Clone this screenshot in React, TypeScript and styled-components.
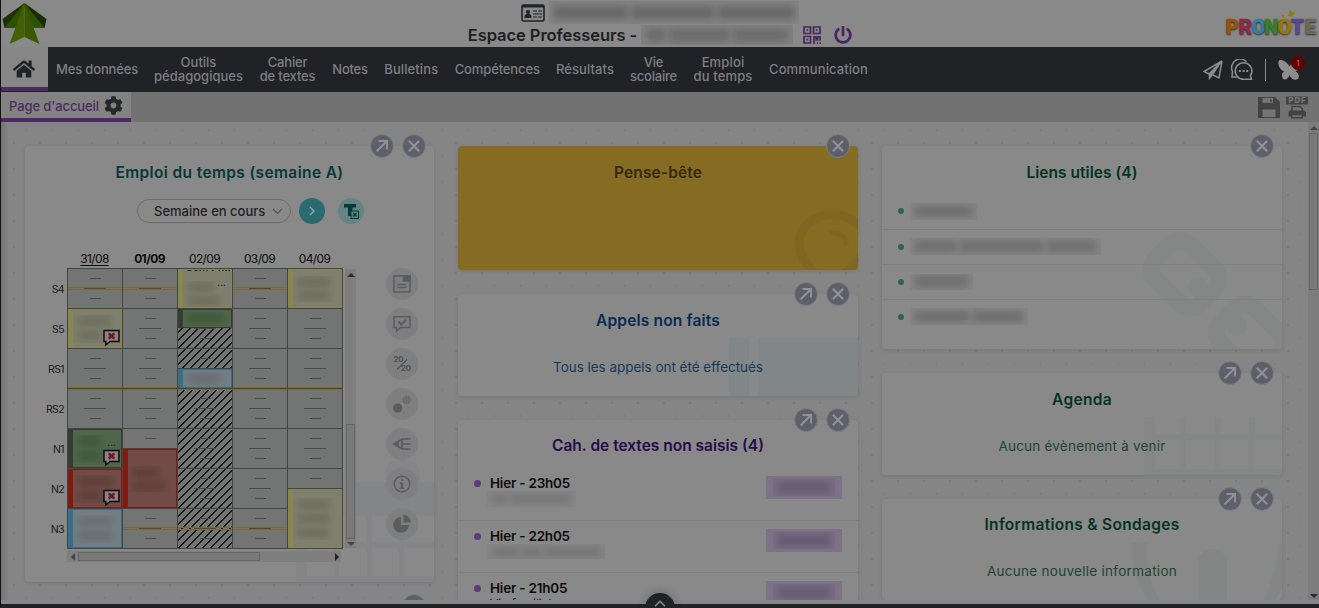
import React from 'react';
import styled, { createGlobalStyle, css } from 'styled-components';
import { FaHome, FaCog, FaPowerOff } from 'react-icons/fa';

const Global = createGlobalStyle`
  * { box-sizing: border-box; }
  body { margin: 0; font-family: Inter, "Liberation Sans", sans-serif; background: #868686; color: #0c0c0c; }
`;

const Screen = styled.div`
  width: 1319px;
  height: 608px;
  display: flex;
  flex-direction: column;
  overflow: hidden;
  background: #868686;
  border-left: 1px solid #111;
  border-bottom: 4px solid #212226;
`;

/* ---------- redacted text ---------- */
const BlurBox = styled.span<{ $w: number; $h: number; $bg?: string }>`
  display: inline-flex;
  flex: none;
  align-items: center;
  gap: 4px;
  width: ${p => p.$w}px;
  height: ${p => p.$h}px;
  padding: 0 5px;
  overflow: hidden;
  background: ${p => p.$bg ?? '#858585'};
`;
const BlurWord = styled.i<{ $grow: number; $tone: string; $t: number }>`
  flex: ${p => p.$grow} 1 0;
  height: ${p => p.$t}px;
  background: ${p => p.$tone};
  filter: blur(3.5px);
`;
interface RedactedProps { w: number; h: number; words: number[]; bg?: string; tone?: string; thick?: number }
const Redacted = ({ w, h, words, bg, tone = '#6e6e6e', thick = 11 }: RedactedProps) => (
  <BlurBox $w={w} $h={h} $bg={bg}>
    {words.map((g, i) => <BlurWord key={i} $grow={g} $tone={tone} $t={thick} />)}
  </BlurBox>
);

/* ---------- header ---------- */
const Header = styled.header`
  flex: none;
  height: 47px;
  display: grid;
  grid-template-columns: 130px 1fr 130px;
  background: #898989;
`;
const Leaf = styled.svg`
  display: block;
  margin: 2px 0 0 0;
`;
const Identity = styled.div`
  display: flex;
  flex-direction: column;
  align-items: center;
`;
const NameLine = styled.div`
  display: flex;
  align-items: center;
  height: 23px;
  gap: 4px;
  margin: 1px 0 0 0;
`;
const SpaceLine = styled.div`
  display: flex;
  align-items: center;
  height: 22px;
  font-size: 16.5px;
  font-weight: 600;
  letter-spacing: -0.06px;
  color: #1d1e22;
  white-space: nowrap;
`;
const QrIcon = styled.svg`margin: 0 13px 0 10px;`;
const Power = styled(FaPowerOff)`
  font-size: 18px;
  color: #4b2661;
`;
const Brand = styled.div`
  position: relative;
  display: flex;
  justify-content: flex-end;
  padding: 15px 2px 0 0;
`;
const Letter = styled.span<{ $c: string }>`
  width: 13px;
  display: flex;
  justify-content: center;
  font: 900 20.5px/24px Roboto, sans-serif;
  color: ${p => p.$c};
  -webkit-text-stroke: 0.4px ${p => p.$c};
  text-shadow: 0 1px 2px rgba(0, 0, 0, 0.75);
`;
const Crown = styled.svg`
  position: absolute;
  right: 23px;
  top: 9px;
`;

/* ---------- main navigation ---------- */
const Nav = styled.nav`
  flex: none;
  height: 45px;
  display: flex;
  background: #212226;
  color: #7e7f82;
`;
const HomeTab = styled.div`
  width: 47px;
  height: 44px;
  display: flex;
  align-items: center;
  justify-content: center;
  padding: 4px 2px 0 0;
  background: #868686;
  border-bottom: 4px solid #4e2a63;
  color: #212226;
  font-size: 22px;
`;
const NavItem = styled.div<{ $w: number; $ls: number }>`
  width: ${p => p.$w}px;
  display: flex;
  align-items: center;
  justify-content: center;
  padding-bottom: 2px;
  text-align: center;
  white-space: pre;
  font-size: 13px;
  font-weight: 500;
  line-height: 14px;
  letter-spacing: ${p => p.$ls}px;
`;
const NavTools = styled.div`
  margin-left: auto;
  display: flex;
  align-items: center;
  padding: 0 13px 0 0;
`;
const Divider = styled.span`
  width: 1px;
  height: 22px;
  margin: 0 12px 0 11px;
  background: #8a8a8a;
`;
const Alerts = styled.span`
  position: relative;
  display: flex;
  width: 28px;
`;
const Count = styled.b`
  position: absolute;
  right: 1px;
  top: -3px;
  width: 14px;
  height: 14px;
  border-radius: 50%;
  background: #640000;
  color: #86706f;
  font-size: 8px;
  font-weight: 500;
  line-height: 14px;
  text-align: center;
`;

/* ---------- page tabs ---------- */
const SubBar = styled.div`
  flex: none;
  height: 30px;
  display: flex;
  justify-content: space-between;
  background: #727272;
`;
const PageTab = styled.div`
  width: 130px;
  display: flex;
  align-items: center;
  gap: 5px;
  padding: 1px 0 0 8px;
  background: #828282;
  border-bottom: 4px solid #4e2a63;
  color: #4e2a63;
  font-size: 13px;
  font-weight: 500;
  letter-spacing: -0.1px;
  white-space: nowrap;
`;
const Gear = styled(FaCog)`
  flex: none;
  color: #26272a;
  font-size: 19px;
`;
const PageTools = styled.div`
  display: flex;
  gap: 5px;
  padding: 4px 11px 0 0;
`;

/* ---------- board ---------- */
const Board = styled.main`
  flex: none;
  height: 478px;
  display: flex;
  justify-content: space-between;
  overflow: hidden;
  background:
    linear-gradient(90deg, rgba(0, 0, 0, 0.14), rgba(0, 0, 0, 0) 8px),
    radial-gradient(circle at 13px 21px, #7b7b7b 1px, transparent 1.6px) 0 0 / 26px 26px,
    radial-gradient(circle at 26px 8px, #7b7b7b 1px, transparent 1.6px) 0 0 / 26px 26px,
    #858585;
`;
const Columns = styled.div`
  display: grid;
  grid-template-columns: 409px 400px 400px;
  gap: 24px;
  align-items: start;
  padding: 24px 0 0 24px;
`;
const Column = styled.div`
  display: flex;
  flex-direction: column;
  gap: 24px;
`;
type Tone = 'teal' | 'blue' | 'violet' | 'green' | 'gold';
const tones: Record<Tone, { title: string; text: string }> = {
  teal: { title: '#083838', text: '#083838' },
  blue: { title: '#062c50', text: '#163b5a' },
  violet: { title: '#270a4c', text: '#270a4c' },
  green: { title: '#053420', text: '#1b4636' },
  gold: { title: '#35290c', text: '#35290c' },
};
const CardBox = styled.section<{ $h: number; $tone: Tone; $pad: number }>`
  position: relative;
  height: ${p => p.$h}px;
  padding-top: ${p => p.$pad}px;
  border-radius: 4px;
  background: ${p => (p.$tone === 'gold' ? '#866b23' : '#898989')};
  box-shadow: 0 1px 4px rgba(0, 0, 0, 0.12);
`;
const Title = styled.h2<{ $tone: Tone; $ls: number }>`
  position: relative;
  margin: 0;
  text-align: center;
  font-size: 15.5px;
  font-weight: 600;
  line-height: 21px;
  letter-spacing: ${p => p.$ls}px;
  color: ${p => tones[p.$tone].title};
`;
const Message = styled.p<{ $tone: Tone; $ls: number }>`
  position: relative;
  margin: 26px 0 0;
  text-align: center;
  font-size: 13.5px;
  line-height: 20px;
  letter-spacing: ${p => p.$ls}px;
  color: ${p => tones[p.$tone].text};
`;
const CardActions = styled.div`
  position: absolute;
  right: 8px;
  top: -12px;
  display: flex;
  gap: 8px;
`;
const ActionDot = styled.span`
  width: 24px;
  height: 24px;
  display: flex;
  align-items: center;
  justify-content: center;
  border-radius: 50%;
  border: 1px solid #7f8086;
  background: #5d5f6a;
`;
const Watermark = styled.svg`
  position: absolute;
  right: 0;
  bottom: 0;
  border-bottom-right-radius: 4px;
`;
const OpenGlyph = () => (
  <ActionDot>
    <svg width="14" height="14" viewBox="0 0 14 14" fill="none" stroke="#929296" strokeWidth="1.9">
      <path d="M1.5 12.5L12 2M3.5 2H12v8.5" />
    </svg>
  </ActionDot>
);
const CloseGlyph = () => (
  <ActionDot>
    <svg width="14" height="14" viewBox="0 0 14 14" fill="none" stroke="#929296" strokeWidth="2">
      <path d="M1.8 1.8l10.4 10.4M12.2 1.8L1.8 12.2" />
    </svg>
  </ActionDot>
);
interface CardProps {
  h: number; tone: Tone; title: string; ls: number; open?: boolean; pad?: number;
  art?: React.ReactNode; children?: React.ReactNode;
}
const Card = ({ h, tone, title, ls, open, pad = 15.5, art, children }: CardProps) => (
  <CardBox $h={h} $tone={tone} $pad={pad}>
    {art}
    <Title $tone={tone} $ls={ls}>{title}</Title>
    {children}
    <CardActions>{open && <OpenGlyph />}<CloseGlyph /></CardActions>
  </CardBox>
);

/* ---------- timetable ---------- */
const WeekBar = styled.div`
  position: relative;
  display: flex;
  align-items: center;
  height: 26px;
  margin-top: 15.5px;
  padding-left: 112px;
`;
const Select = styled.div`
  width: 154px;
  height: 24px;
  display: flex;
  align-items: center;
  justify-content: space-between;
  padding: 0 7px 0 16px;
  border: 1px solid #6e6e6e;
  border-radius: 12px;
  font-size: 13px;
  font-weight: 500;
  color: #222;
  white-space: nowrap;
`;
const RoundButton = styled.span<{ $bg: string; $ml: number }>`
  width: 26px;
  height: 26px;
  margin-left: ${p => p.$ml}px;
  display: flex;
  align-items: center;
  justify-content: center;
  border-radius: 50%;
  background: ${p => p.$bg};
`;
const Days = styled.div`
  display: grid;
  grid-template-columns: repeat(5, 55px);
  height: 18px;
  margin: 26px 0 0 42px;
`;
const Day = styled.span<{ $kind?: 'past' | 'today' }>`
  font-size: 12px;
  line-height: 17px;
  letter-spacing: -0.62px;
  text-align: center;
  ${p => p.$kind === 'today' && css`font-weight: 700;`}
  ${p => p.$kind === 'past' && css`text-decoration: underline; text-underline-offset: 2px;`}
`;
const TableRow = styled.div`
  position: relative;
  display: flex;
  align-items: flex-start;
`;
const Hours = styled.div`
  width: 42px;
  display: grid;
  grid-auto-rows: 40px;
  padding-top: 1px;
`;
const Hour = styled.span`
  padding-right: 3px;
  text-align: right;
  font-size: 10.5px;
  line-height: 42px;
  letter-spacing: -0.6px;
  color: #1a1a1a;
`;
const Schedule = styled.div`
  display: grid;
  grid-template-columns: repeat(5, 55px);
  grid-template-rows: repeat(14, 20px);
  border-left: 1px solid #444;
  border-top: 1px solid #444;
`;
const tick = 'linear-gradient(#4a4a4a, #4a4a4a) no-repeat';
const gold = 'linear-gradient(#7d6c26, #7d6c26) no-repeat';
const Slot = styled.div<{ $c: number; $r: number; $hatch: boolean; $mid: boolean; $end: boolean; $start: boolean }>`
  grid-column: ${p => p.$c};
  grid-row: ${p => p.$r} / span 2;
  border-right: 1px solid #444;
  border-bottom: 1px solid #444;
  background:
    ${p => p.$mid && `${gold} 0 18px / 100% 1px, ${gold} 0 20px / 100% 1px,`}
    ${p => p.$end && `${gold} 0 38px / 100% 1px,`}
    ${p => p.$start && `${gold} 0 0 / 100% 1px,`}
    ${tick} 22px 9px / 11px 1px,
    ${tick} 16px 19px / 22px 1px,
    ${tick} 22px 29px / 11px 1px,
    ${p => p.$hatch && 'repeating-linear-gradient(135deg, transparent 0 4.9px, #111 4.9px 5.657px),'}
    #727574;
`;
type Hue = 'yellow' | 'green' | 'red' | 'blue';
const hues: Record<Hue, { edge: string; fill: string; ink: string }> = {
  yellow: { edge: '#89864e', fill: '#7f7f70', ink: '#6f6f60' },
  green: { edge: '#363c33', fill: '#4f664a', ink: '#40583c' },
  red: { edge: '#821a10', fill: '#714b46', ink: '#603f3b' },
  blue: { edge: '#356f89', fill: '#747d83', ink: '#686f74' },
};
const Lesson = styled.div<{ $c: number; $r: number; $n: number; $hue: Hue }>`
  position: relative;
  grid-column: ${p => p.$c};
  grid-row: ${p => p.$r} / span ${p => p.$n};
  display: flex;
  flex-direction: column;
  align-items: flex-start;
  justify-content: center;
  overflow: hidden;
  margin: 0 1px 1px 0;
  border: 1px solid ${p => hues[p.$hue].edge};
  border-left-width: 5px;
  background: ${p => hues[p.$hue].fill};
`;
const LessonFrame = styled.div<{ $c: number; $r: number; $n: number }>`
  grid-column: ${p => p.$c};
  grid-row: ${p => p.$r} / span ${p => p.$n};
  margin-top: -1px;
  border-top: 1px solid #444;
`;
const CutLabel = styled.span`
  height: 11px;
  margin: -8px 0 auto 2px;
  font-size: 10.5px;
  font-weight: 500;
  line-height: 12px;
  white-space: nowrap;
`;
const Ellipsis = styled.span`
  position: absolute;
  right: 5px;
  top: 6px;
  font-size: 10px;
  line-height: 12px;
`;
const Flag = styled.svg`
  position: absolute;
  right: 1px;
  bottom: 1px;
`;
const MissingFlag = () => (
  <Flag width="17" height="17" viewBox="0 0 17 17">
    <path d="M1 1.500h15v11H7L2.800 16v-3.500H1z" fill="#8a8285" stroke="#080808" strokeWidth="1.4" />
    <path d="M5.700 4.300l5.600 5.400M11.300 4.300L5.700 9.700" stroke="#6f1424" strokeWidth="2.500" />
  </Flag>
);
const VScroll = styled.div`
  width: 11px;
  height: 279px;
  margin: 1px 0 0 2px;
  display: grid;
  grid-template-rows: 155px 115px 9px;
  justify-items: center;
  background: #7e7e7e;
`;
const HScroll = styled.div`
  position: relative;
  width: 274px;
  height: 11px;
  margin: 2px 0 0 42px;
  display: grid;
  grid-template-columns: 11px 182px 1fr;
  align-items: center;
  background: #7e7e7e;
`;
const Thumb = styled.span`
  width: 100%;
  height: 100%;
  border: 1px solid #666;
  background: #797979;
`;
const HThumb = styled(Thumb)`height: 9px;`;
const VThumb = styled(Thumb)`width: 9px;`;
const Arrow = styled.i<{ $dir: 'up' | 'down' | 'left' | 'right' }>`
  width: 0;
  height: 0;
  border: 4px solid transparent;
  ${p => p.$dir === 'up' && css`border-top: 0; border-bottom-color: #2b2b2b; margin-top: 4px;`}
  ${p => p.$dir === 'down' && css`border-bottom: 0; border-top-color: #444; margin-top: 3px;`}
  ${p => p.$dir === 'left' && css`border-left: 0; border-right-color: #444; margin-left: 4px;`}
  ${p => p.$dir === 'right' && css`border-right: 0; border-left-color: #222; margin-right: 2px; justify-self: end;`}
`;
const Shortcuts = styled.div`
  display: flex;
  flex-direction: column;
  gap: 8px;
  margin-left: 30px;
`;
const Shortcut = styled.span`
  width: 32px;
  height: 32px;
  display: flex;
  align-items: center;
  justify-content: center;
  border-radius: 50%;
  background: #7f7f7f;
`;
const GradeText = styled.span`
  display: grid;
  width: 17px;
  font-size: 8px;
  font-weight: 800;
  line-height: 9px;
  letter-spacing: -0.5px;
  background: linear-gradient(135deg, transparent 46%, #55565b 46% 54%, transparent 54%) center / 10px 13px no-repeat;
  color: #55565b;
  span + span { text-align: right; }
`;

const hatchedColumn = 3;
const golden = (c: number, row: number) =>
  (row === 0 && (c <= 2 || c === 4)) || (row === 6 && c >= 2 && c <= 4);
const hourNames = ['S4', 'S5', 'RS1', 'RS2', 'N1', 'N2', 'N3'];

interface LessonData { c: number; r: number; n: number; hue: Hue; lines: number[]; h: number; missing?: boolean; dots?: boolean; cut?: string }
const lessons: LessonData[] = [
  { c: 3, r: 1, n: 2, hue: 'yellow', lines: [36, 42], h: 13, cut: 'Com Pr…', dots: true },
  { c: 5, r: 1, n: 2, hue: 'yellow', lines: [42, 42], h: 13 },
  { c: 1, r: 3, n: 2, hue: 'yellow', lines: [42, 34], h: 14, missing: true },
  { c: 3, r: 3, n: 1, hue: 'green', lines: [46], h: 14 },
  { c: 3, r: 6, n: 1, hue: 'blue', lines: [42], h: 14 },
  { c: 1, r: 9, n: 2, hue: 'green', lines: [32, 32], h: 14, missing: true, dots: true },
  { c: 1, r: 11, n: 2, hue: 'red', lines: [44, 34], h: 14, missing: true },
  { c: 2, r: 10, n: 3, hue: 'red', lines: [36, 42], h: 13 },
  { c: 1, r: 13, n: 2, hue: 'blue', lines: [44, 44], h: 14 },
  { c: 5, r: 12, n: 3, hue: 'yellow', lines: [42, 42, 40], h: 14 },
];

const Timetable = () => (
  <>
    <WeekBar>
      <Select>
        Semaine en cours
        <svg width="11" height="7" fill="none" stroke="#555" strokeWidth="1.2"><path d="M1 1l4.500 4.500L10 1" /></svg>
      </Select>
      <RoundButton $bg="#2a6a70" $ml={8}>
        <svg width="6" height="10" fill="none" stroke="#93a8aa" strokeWidth="1.400"><path d="M1 1l4 4-4 4" /></svg>
      </RoundButton>
      <RoundButton $bg="#638483" $ml={13}>
        <svg width="16" height="16" viewBox="0 0 16 16">
          <path d="M1 1h12v3.500H9.500V13H5V4.500H1z" fill="#053a3c" />
          <rect x="8" y="8" width="7.500" height="7.500" fill="#638483" stroke="#053a3c" />
          <path d="M10 10l3.500 3.500M13.500 10L10 13.500" stroke="#053a3c" strokeWidth="1.300" />
        </svg>
      </RoundButton>
    </WeekBar>
    <Days>
      <Day $kind="past">31/08</Day><Day $kind="today">01/09</Day><Day>02/09</Day><Day>03/09</Day><Day>04/09</Day>
    </Days>
    <TableRow>
      <Hours>{hourNames.map(h => <Hour key={h}>{h}</Hour>)}</Hours>
      <Schedule>
        {hourNames.flatMap((h, row) => [1, 2, 3, 4, 5].map(c => (
          <Slot key={h + c} $c={c} $r={row * 2 + 1} $hatch={c === hatchedColumn} $mid={golden(c, row)}
            $end={row === 2} $start={row === 3} />
        )))}
        {lessons.map((l, i) => (
          <React.Fragment key={i}>
            <LessonFrame $c={l.c} $r={l.r} $n={l.n} />
            <Lesson $c={l.c} $r={l.r} $n={l.n} $hue={l.hue}>
              {l.cut && <CutLabel>{l.cut}</CutLabel>}
              {l.lines.map((w, k) => (
                <Redacted key={k} w={w} h={l.h} words={[1]} bg="transparent" tone={hues[l.hue].ink} thick={11} />
              ))}
              {l.dots && <Ellipsis>...</Ellipsis>}
              {l.missing && <MissingFlag />}
            </Lesson>
          </React.Fragment>
        ))}
      </Schedule>
      <VScroll><Arrow $dir="up" /><VThumb /><Arrow $dir="down" /></VScroll>
      <Shortcuts>
        <Shortcut>
          <svg width="18" height="18" fill="none" stroke="#5b5c61" strokeWidth="1.500">
            <path d="M1 1h16v16H1zM4.500 9.500h9M4.500 12.500h9" /><path d="M10.500 1h6.500v5h-6.500z" fill="#5b5c61" />
          </svg>
        </Shortcut>
        <Shortcut>
          <svg width="18" height="18" fill="none" stroke="#5b5c61" strokeWidth="1.500">
            <path d="M1 1.800h16v10.700H7.500L3.500 16v-3.500H1z" /><path d="M5.500 6.500l3 3L13 4.700" strokeWidth="2.300" />
          </svg>
        </Shortcut>
        <Shortcut><GradeText><span>20</span><span>20</span></GradeText></Shortcut>
        <Shortcut>
          <svg width="18" height="18" fill="#5b5c61"><circle cx="4.700" cy="13" r="4.600" /><circle cx="13.700" cy="4.900" r="4.300" opacity=".3" /><path d="M10.200 2.500h1.200v5h-1.200zM12.500 0.800h1.200v8.300h-1.200zM14.800 0.800h1.200v8.300h-1.200zM17 3h.9v4H17z" opacity=".5" /></svg>
        </Shortcut>
        <Shortcut>
          <svg width="18" height="14" fill="none" stroke="#5b5c61" strokeWidth="1.700">
            <path d="M17.500 2H9L1.500 7 9 12h8.500M10 7h7.500M9 2v10" /><path d="M1 7l4-2.500v5z" fill="#5b5c61" />
          </svg>
        </Shortcut>
        <Shortcut>
          <svg width="18" height="18"><circle cx="9" cy="9" r="7.800" fill="none" stroke="#5b5c61" strokeWidth="1.500" /><path d="M8 4h2.300v2H8zM6.700 7.500h3.500v5h1v1.500H6.700v-1.500h1.100V9H6.700z" fill="#5b5c61" /></svg>
        </Shortcut>
        <Shortcut>
          <svg width="18" height="18" fill="#5b5c61"><path d="M8 2v8h8a7.900 7.900 0 1 1-8-8z" /><path d="M10.500 0A7.500 7.500 0 0 1 17.800 7.500h-7.300z" /></svg>
        </Shortcut>
      </Shortcuts>
    </TableRow>
    <HScroll><Arrow $dir="left" /><HThumb /><Arrow $dir="right" /></HScroll>
  </>
);

/* ---------- lists ---------- */
const Lessons = styled.div`
  position: relative;
  margin-top: 10.5px;
`;
const TodoRow = styled.div`
  display: grid;
  grid-template-columns: 7px 1fr 76px;
  column-gap: 9px;
  align-items: start;
  height: 52px;
  padding: 8px 16px 0;
  & + & { border-top: 1px solid #7f7f7f; padding-top: 8px; }
  &:first-child { height: 53px; padding-top: 9px; }
`;
const Dot = styled.i`
  width: 7px;
  height: 7px;
  margin-top: 4px;
  border-radius: 50%;
  background: #5b3d7e;
`;
const When = styled.div`
  margin-top: -0.5px;
  font-size: 13.5px;
  font-weight: 600;
  line-height: 16px;
  letter-spacing: -0.22px;
`;
const Sub = styled.div`
  display: flex;
  margin: 0 0 0 -3px;
`;
const SubText = styled.div`
  font-size: 12px;
  line-height: 15px;
`;
const Tag = styled.span`
  display: flex;
  align-items: center;
  justify-content: center;
  height: 23px;
  background: #7c7186;
`;
const Links = styled.div`
  position: relative;
  margin-top: 11px;
`;
const LinkRow = styled.div`
  display: flex;
  align-items: center;
  gap: 6px;
  height: 35px;
  padding-left: 16px;
  & + & { border-top: 1px solid #7e8080; }
`;
const GreenDot = styled.i`
  width: 6px;
  height: 6px;
  border-radius: 50%;
  background: #316549;
`;

/* ---------- edge controls ---------- */
const PageScroll = styled.div`
  width: 11px;
  display: grid;
  grid-template-rows: 11px 157px 1fr;
  justify-items: center;
  background: #7c7c7c;
  ${Arrow}:last-child { align-self: end; margin-bottom: 2px; border-top-color: #2b2b2b; }
  ${Arrow}:first-child { border-bottom-color: #444; }
`;
const Drawer = styled.div`
  position: absolute;
  left: 645px;
  top: 593px;
  width: 30px;
  height: 15px;
  display: flex;
  justify-content: center;
  padding-top: 7px;
  border-radius: 15px 15px 0 0;
  background: #212226;
  box-shadow: 0 -2px 8px rgba(0, 0, 0, 0.2);
`;

const brand: [string, string][] = [['P', '#9a5208'], ['R', '#8a2b48'], ['O', '#377c9c'], ['N', '#3d7c2c'], ['O', '#9a7508'], ['T', '#584993'], ['E', '#6b6858']];
const nav: [string, number, number][] = [
  ['Mes données', 98, -0.16], ['Outils\npédagogiques', 105, 0], ['Cahier\nde textes', 73, -0.18], ['Notes', 52, -0.25],
  ['Bulletins', 70.5, 0.1], ['Compétences', 101.5, -0.12], ['Résultats', 74, 0.07], ['Vie\nscolaire', 63, -0.2],
  ['Emploi\ndu temps', 76, 0.15], ['Communication', 115, 0.09],
];

export default function App() {
  return (
    <Screen>
      <Global />
      <Header>
        <Leaf width="47" height="43" viewBox="0 0 46 43">
          <path d="M23 1L1 17l2 9h18z" fill="#1d3202" /><path d="M23 1l22 16-2 9H25z" fill="#1a2b02" />
          <path d="M23 1L3 26h16zM23 1l20 25H27z" fill="#2b5303" />
          <path d="M23 1L8 42l15-7z" fill="#445f04" /><path d="M23 1l15 41-15-7z" fill="#3d5603" />
        </Leaf>
        <Identity>
          <NameLine>
            <svg width="24" height="18" viewBox="0 0 24 18">
              <rect x="1" y="1" width="22" height="16" rx="1.500" fill="none" stroke="#212226" strokeWidth="1.600" />
              <path d="M1 1h22v2.500H1z" fill="#212226" />
              <circle cx="7" cy="8" r="2.100" fill="#212226" />
              <path d="M3.500 14c0-4 1.500-4 3.500-4s3.500 0 3.500 4z" fill="#212226" />
              <path d="M12 7h4m1 0h4M12 10h9M12 13h4m1 0h4" stroke="#212226" strokeWidth="1.200" />
            </svg>
            <Redacted w={250} h={23} words={[75, 86, 78]} bg="#838383" tone="#676767" thick={13} />
          </NameLine>
          <SpaceLine>
            <span>Espace Professeurs -&nbsp;</span>
            <Redacted w={152} h={20} words={[20, 65, 60]} bg="#818181" tone="#6b6b6b" thick={12} />
            <QrIcon width="18" height="18" fill="none" stroke="#4b2661" strokeWidth="1.700">
              <path d="M1 1h6.500v6.500H1zM10.500 1H17v6.500h-6.500zM1 10.500h6.500V17H1z" />
              <path d="M3.400 4.200h1.700M12.900 4.200h1.700M3.400 13.700h1.700M11 18v-7.200h2.200v3h1.400v-3H17v4M13.800 17h1.400M16.400 17H18" />
            </QrIcon>
            <Power />
          </SpaceLine>
        </Identity>
        <Brand>
          {brand.map(([l, c], i) => <Letter key={i} $c={c}>{l}</Letter>)}
          <Crown width="15" height="9"><path d="M6 7l2-2 1-4 2 2 3 1-2 2-1 2-3-1z" fill="#8f7c10" /><circle cx="2" cy="7" r="1.500" fill="#8f7c10" /></Crown>
        </Brand>
      </Header>
      <Nav>
        <HomeTab><FaHome /></HomeTab>
        {nav.map(([t, w, ls]) => <NavItem key={t} $w={w} $ls={ls}>{t}</NavItem>)}
        <NavTools>
          <svg width="20" height="20" fill="none" stroke="#8d8d8d" strokeWidth="1.500">
            <path d="M19 1L1 11.500l5 2.500zM19 1l-3 17-6-3" /><path d="M19 1L6 14v5.500l3.500-4z" fill="#8d8d8d" strokeWidth=".6" />
          </svg>
          <svg width="31" height="22" viewBox="-8 0 31 22" fill="none" stroke="#8d8d8d" strokeWidth="1.500">
            <path d="M20.500 20.300h-7.700a8.300 8.300 0 1 1 6.600-3.600z" /><path d="M15.500 2.800A8.600 8.600 0 0 0 1.500 12.500L1 18h5" />
            <path d="M7.900 12h2M11.600 12h2M15.300 12h2" strokeWidth="2" />
          </svg>
          <Divider />
          <Alerts>
            <svg width="23" height="22" viewBox="0 0 23 22" fill="#8d8d8d">
              <path d="M11.500 7.500C9.500 3 4.500.5 2 1s-2 6 .5 9c1 1.200 2.500 2 3.800 2.200C4 13.500 3.500 16 4.500 19c2 3 5.500 1.500 7-3 1.500 4 5 6 8.500 4 2-2.500.5-6-2.500-8 4-1 5.500-4.500 4.500-8.500-2-3-7.500-1-10.500 4z" />
            </svg>
            <Count>1</Count>
          </Alerts>
        </NavTools>
      </Nav>
      <SubBar>
        <PageTab>Page d'accueil<Gear /></PageTab>
        <PageTools>
          <svg width="23" height="23">
            <path d="M0 1h17l5 5v16H0z" fill="#434343" /><path d="M4.500 2H15v5H4.500zM4.500 13.500h13V21h-13z" fill="#747474" /><path d="M12 3.500h1.800V6H12z" fill="#434343" />
          </svg>
          <svg width="22" height="23">
            <rect y="0.500" width="22" height="8" fill="#434343" />
            <text x="11" y="7.400" textAnchor="middle" fontFamily="Inter" fontSize="7.800" fontWeight="800" fill="#787878" textLength="17">PDF</text>
            <path d="M6 16v-5.500h8l2.500 2.500v3" fill="none" stroke="#434343" strokeWidth="1.500" />
            <path d="M2.500 16l1.500-1.500h14l2 1.500v4.500h-3V18H5v2.500H2.500z" fill="#434343" /><path d="M5.700 18.500h10.600v3.300H5.700z" fill="none" stroke="#434343" strokeWidth="1.400" />
          </svg>
        </PageTools>
      </SubBar>
      <Board>
        <Columns>
          <Column>
            <Card h={436} tone="teal" title="Emploi du temps (semaine A)" ls={0.37} open art={
              <Watermark width="138" height="122" viewBox="0 0 138 122">
                <path fill="#828687" d="M0 22h90V12q0-12 17-12t17 12v10h14v100H0z" />
                <path fill="#898989" d="M11 56h27v26H11zM43 56h27v26H43zM76 56h26v26H76zM107 56h31v26h-31zM11 88h27v28H11zM43 88h28v28H43zM76 88h27v28H76zM108 88h30v28h-30z" />
              </Watermark>}>
              <Timetable />
            </Card>
            <Card h={120} tone="teal" title="" ls={0} />
          </Column>
          <Column>
            <Card h={124} tone="gold" title="Pense-bête" ls={0.13} art={
              <Watermark width="64" height="60" viewBox="0 0 64 60" fill="none" stroke="#7f6622">
                <path strokeWidth="9" d="M21 64Q5 46 5 33a33.500 28.500 0 0 1 67 0Q72 46 50 64" /><path strokeWidth="5" strokeLinecap="round" d="M38 23q14 0 14 10" />
              </Watermark>} />
            <Card h={102} tone="blue" title="Appels non faits" ls={0.18} open art={
              <Watermark width="129" height="58" fill="#818689"><path d="M0 0h20v58H0zM29 0h100v58H29z" /></Watermark>}>
              <Message $tone="blue" $ls={-0.03}>Tous les appels ont été effectués</Message>
            </Card>
            <Card h={260} tone="violet" title="Cah. de textes non saisis (4)" ls={0} open pad={15}>
              <Lessons>
                <TodoRow>
                  <Dot /><div><When>Hier - 23h05</When><Sub><Redacted w={89} h={16} words={[1, 4]} thick={8} tone="#737673" /></Sub></div>
                  <Tag><Redacted w={62} h={17} words={[1]} bg="#786d82" tone="#655a70" thick={11} /></Tag>
                </TodoRow>
                <TodoRow>
                  <Dot /><div><When>Hier - 22h05</When><Sub><Redacted w={118} h={15} words={[3, 2, 6]} thick={8} tone="#737373" /></Sub></div>
                  <Tag><Redacted w={62} h={17} words={[1]} bg="#786d82" tone="#655a70" thick={11} /></Tag>
                </TodoRow>
                <TodoRow>
                  <Dot /><div><When>Hier - 21h05</When><SubText>Vie familiale</SubText></div>
                  <Tag><Redacted w={62} h={17} words={[1]} bg="#786d82" tone="#655a70" thick={11} /></Tag>
                </TodoRow>
              </Lessons>
            </Card>
          </Column>
          <Column>
            <Card h={203} tone="green" title="Liens utiles (4)" ls={0.04} art={
              <Watermark width="139" height="118" viewBox="0 0 139 118" fill="none" stroke="#848785" strokeWidth="17">
                <rect x="10.500" y="18.500" width="63" height="49" rx="14" transform="rotate(45 42 43)" />
                <rect x="75.500" y="82.500" width="63" height="49" rx="14" transform="rotate(45 107 107)" />
                <g fill="#848785" stroke="none"><circle cx="55" cy="56" r="10" /><circle cx="94" cy="95" r="10" /></g>
              </Watermark>}>
              <Links>
                <LinkRow><GreenDot /><Redacted w={67} h={17} words={[1]} /></LinkRow>
                <LinkRow><GreenDot /><Redacted w={191} h={17} words={[42, 86, 50]} /></LinkRow>
                <LinkRow><GreenDot /><Redacted w={63} h={16} words={[1]} /></LinkRow>
                <LinkRow><GreenDot /><Redacted w={118} h={17} words={[53, 50]} /></LinkRow>
              </Links>
            </Card>
            <Card h={102} tone="green" title="Agenda" ls={0.34} open art={
              <Watermark width="138" height="58" fill="#848786"><path d="M0 0h11v58H0zM36 0h6v17h-6zM71 0h6v17h-6zM105 0h6v17h-6zM36 23h6v29h-6zM71 23h5v29h-5zM105 23h5v29h-5zM11 17h127v6H11zM11 52h127v6H11z" /></Watermark>}>
              <Message $tone="green" $ls={0.21}>Aucun évènement à venir</Message>
            </Card>
            <Card h={101} tone="green" title="Informations & Sondages" ls={0.3} open pad={15} art={
              <Watermark width="150" height="57" viewBox="0 0 150 57" fill="#848686"><path d="M0 0h15q-2 32 13 58H16Q-2 32 0 0zM150 0h-4q0 32-16 58h12q4-4 8-14zM66 58V17a15 15 0 0 1 29 0v41z" /></Watermark>}>
              <Message $tone="green" $ls={0.28}>Aucune nouvelle information</Message>
            </Card>
          </Column>
        </Columns>
        <PageScroll><Arrow $dir="up" /><VThumb /><Arrow $dir="down" /></PageScroll>
      </Board>
      <Drawer><svg width="12" height="7" fill="none" stroke="#8d8d8d" strokeWidth="1.500"><path d="M1 6.200l5-5 5 5" /></svg></Drawer>
    </Screen>
  );
}
